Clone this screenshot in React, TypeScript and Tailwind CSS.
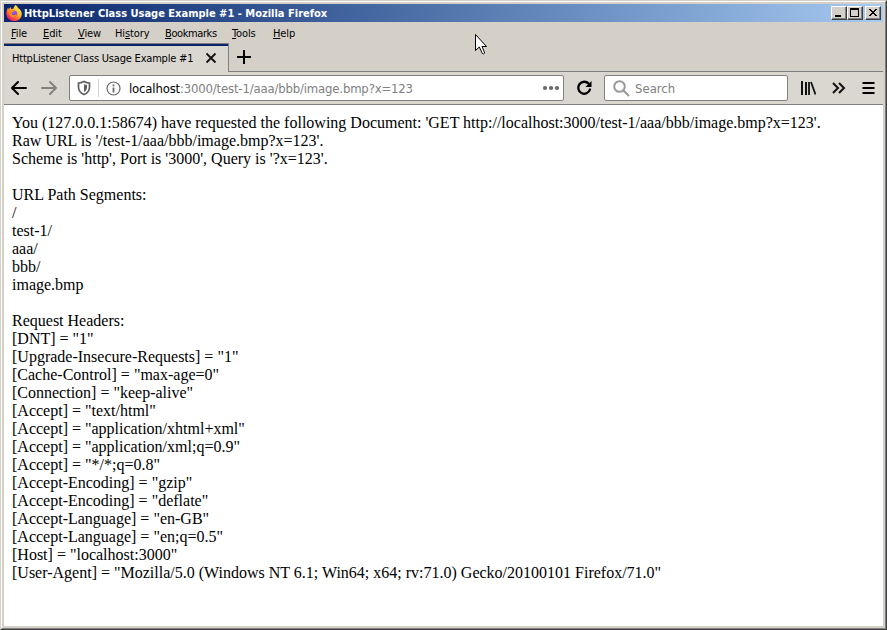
import React from "react";

const menus: [string, string, string, string][] = [
  ["", "F", "ile", "w-[32px]"],
  ["", "E", "dit", "w-[35px]"],
  ["", "V", "iew", "w-[37px]"],
  ["Hi", "s", "tory", "w-[50px]"],
  ["", "B", "ookmarks", "w-[67px] tracking-[-0.4px]"],
  ["", "T", "ools", "w-[41px]"],
  ["", "H", "elp", "w-[40px]"],
];

const lines = [
  "You (127.0.0.1:58674) have requested the following Document: 'GET http://localhost:3000/test-1/aaa/bbb/image.bmp?x=123'.",
  "Raw URL is '/test-1/aaa/bbb/image.bmp?x=123'.",
  "Scheme is 'http', Port is '3000', Query is '?x=123'.",
  "",
  "URL Path Segments:",
  "/",
  "test-1/",
  "aaa/",
  "bbb/",
  "image.bmp",
  "",
  "Request Headers:",
  '[DNT] = "1"',
  '[Upgrade-Insecure-Requests] = "1"',
  '[Cache-Control] = "max-age=0"',
  '[Connection] = "keep-alive"',
  '[Accept] = "text/html"',
  '[Accept] = "application/xhtml+xml"',
  '[Accept] = "application/xml;q=0.9"',
  '[Accept] = "*/*;q=0.8"',
  '[Accept-Encoding] = "gzip"',
  '[Accept-Encoding] = "deflate"',
  '[Accept-Language] = "en-GB"',
  '[Accept-Language] = "en;q=0.5"',
  '[Host] = "localhost:3000"',
  '[User-Agent] = "Mozilla/5.0 (Windows NT 6.1; Win64; x64; rv:71.0) Gecko/20100101 Firefox/71.0"',
];

function FirefoxLogo() {
  return (
    <svg width="16" height="16" viewBox="0 0 16 16" className="shrink-0">
      <defs>
        <linearGradient id="flame" x1="0.85" y1="0.1" x2="0.2" y2="0.95">
          <stop offset="0" stopColor="#fff14a" />
          <stop offset="0.4" stopColor="#ffb52b" />
          <stop offset="0.7" stopColor="#ff5a36" />
          <stop offset="1" stopColor="#e3157f" />
        </linearGradient>
        <radialGradient id="globe" cx="0.5" cy="0.3" r="0.7">
          <stop offset="0" stopColor="#a05cf0" />
          <stop offset="1" stopColor="#5a3ccc" />
        </radialGradient>
      </defs>
      <path d="M9.5 0C11 1 11.8 2.2 12.2 3.2 14 4 15.8 6.200 15.800 9A7.500 7 0 0 1 .4 9C.2 6.500 1 4.500 2.200 2.600L2.800 4.200 4.600 2 5.200 4 7.500 3.800C7.700 2.200 8.500.9 9.500 0Z" fill="url(#flame)" />
      <circle cx="8" cy="8.600" r="3" fill="url(#globe)" />
      <path d="M2.500 4.600C4 4 5.800 4.200 6.800 5.300L8.800 6 6.300 7.500C5.300 8.500 5.800 9.600 6.800 10 8.500 10.500 9.500 9.300 10.800 9.600 9.800 12.400 6.400 13 4.400 11 3 9.500 2.300 7.300 2.500 4.600Z" fill="#ff8a24" />
    </svg>
  );
}

function CaptionButton({ children }: { children: React.ReactNode }) {
  return (
    <div className="h-[14px] w-4 border border-t-white border-l-white border-r-[#404040] border-b-[#404040] bg-[#d4d0c8]">
      <div className="h-full w-full border-r border-b border-[#808080]">
        <svg width="13" height="11" viewBox="0 0 13 11" shapeRendering="crispEdges" className="block">
          {children}
        </svg>
      </div>
    </div>
  );
}

function TitleBar() {
  return (
    <div className="flex h-[18px] items-center bg-linear-to-r from-[#0a246a] to-[#a6caf0] pr-[2px] pl-[2px]">
      <FirefoxLogo />
      <span className="ml-[2px] flex-1 pt-[2px] text-[11px] leading-[16px] font-bold text-white">
        HttpListener Class Usage Example #1 - Mozilla Firefox
      </span>
      <CaptionButton><path d="M3 8h6v2H3z" /></CaptionButton>
      <CaptionButton><path d="M2 1h9v9H2zM3 3v6h7V3z" fillRule="evenodd" /></CaptionButton>
      <div className="w-[2px]" />
      <CaptionButton>
        <path d="M3 2h2v1h1v1h2V3h1V2h2v1h-1v1H9v1H8v1h1v1h1v1h1v1H9V8H8V7H6v1H5v1H3V8h1V7h1V6h1V5H5V4H4V3H3z" />
      </CaptionButton>
    </div>
  );
}

function MenuBar() {
  return (
    <div className="flex h-[21px] pl-[7px] text-[11px] leading-[23px] tracking-[-0.12px]">
      {menus.map(([a, u, b, w]) => (
        <span key={u} className={w + " shrink-0 whitespace-nowrap"}>
          {a}<span className="underline underline-offset-1">{u}</span>{b}
        </span>
      ))}
    </div>
  );
}

function TabStrip() {
  return (
    <div className="flex h-[29px]">
      <div className="flex w-[225px] items-center border-t border-r border-t-[#808080] border-r-[#808080] bg-[#dad7d0]">
        <div className="flex h-full w-full items-center border-t-2 border-[#0a246a] pl-2 text-[11px]">
          <span className="w-[193px] whitespace-nowrap tracking-[-0.2px]">HttpListener Class Usage Example #1</span>
          <svg className="-mt-[2px]" width="12" height="12" viewBox="0 0 12 12" stroke="#111" strokeWidth="1.8"><path d="M1.500 1.500l9 9m0-9l-9 9" /></svg>
        </div>
      </div>
      <div className="flex-1 border-b border-[#808080] pt-[7px] pl-2">
        <svg width="14" height="14" viewBox="0 0 14 14" stroke="#000" strokeWidth="2"><path d="M7 0v14M0 7h14" /></svg>
      </div>
    </div>
  );
}

function Toolbar() {
  return (
    <div className="flex h-[33px] items-center border-b border-[#808080] bg-[#dad7d0] pl-[7px]">
      <svg width="16" height="16" viewBox="0 0 16 16" fill="none" stroke="#000" strokeWidth="2" strokeLinecap="round" strokeLinejoin="round"><path d="M1 8h14M7 2L1 8l6 6" /></svg>
      <svg className="ml-[14px]" width="16" height="16" viewBox="0 0 16 16" fill="none" stroke="#85827d" strokeWidth="2" strokeLinecap="round" strokeLinejoin="round"><path d="M1 8h14M9 2l6 6-6 6" /></svg>
      <div className="ml-[12px] flex h-[26px] w-[495px] shrink-0 items-center rounded-[2px] border border-[#808080] bg-white pl-[7px]">
        <svg width="14" height="16" viewBox="0 0 14 16">
          <path d="M7 1.500C8.700 2.500 10.700 3 12.500 3V7.500C12.300 11 10.200 13.200 7 14.500 3.800 13.200 1.700 11 1.500 7.500V3C3.300 3 5.300 2.500 7 1.500Z" fill="none" stroke="#606060" strokeWidth="1.700" />
          <path d="M7 4.200L10 5V7.500C9.800 9.800 9 11 7 12Z" fill="#606060" />
        </svg>
        <div className="mx-[7px] h-[18px] w-px bg-[#d4d0c8]" />
        <svg width="15" height="15" viewBox="0 0 15 15" fill="none" stroke="#686868"><circle cx="7.500" cy="7.500" r="6.500" strokeWidth="1.200" /><path d="M7.500 6.500v5" strokeWidth="1.800" /><path d="M7.500 3.500v1.800" strokeWidth="1.800" /></svg>
        <span className="ml-[8px] flex-1 whitespace-nowrap pt-[2px] text-[13px] leading-[22px] tracking-[-0.17px] text-[#808080]"><span className="text-black">localhost</span>:3000/test-1/aaa/bbb/image.bmp?x=123</span>
        <svg className="mr-[3px]" width="18" height="6" viewBox="0 0 18 6" fill="#686868"><circle cx="3" cy="3" r="2.100" /><circle cx="9" cy="3" r="2.100" /><circle cx="15" cy="3" r="2.100" /></svg>
      </div>
      <svg className="ml-[12px]" width="17" height="16" viewBox="0 0 17 16"><path d="M12.800 3.800A6 6 0 1 0 14 9.500" fill="none" stroke="#000" strokeWidth="2.300" strokeLinecap="round" /><path d="M15.500 1v6H9.500z" /></svg>
      <div className="ml-[11px] flex h-[26px] w-[184px] shrink-0 items-center rounded-[2px] border border-[#808080] bg-white pl-[8px]">
        <svg width="17" height="17" viewBox="0 0 17 17" fill="none" stroke="#999" strokeWidth="2"><circle cx="6.500" cy="6.500" r="5.300" /><path d="M10.300 10.300l5.700 5.700" /></svg>
        <span className="ml-[5px] pt-[2px] text-[13px] leading-[22px] text-[#808080]">Search</span>
      </div>
      <svg className="ml-[12px]" width="16" height="16" viewBox="0 0 16 16" fill="none" stroke="#111" strokeWidth="2"><path d="M2 1v14M6 2v13" /><path d="M9 2v13M11 2l4.500 12.500" strokeWidth="1.800" /></svg>
      <svg className="ml-[15px]" width="15" height="14" viewBox="0 0 15 14" fill="none" stroke="#111" strokeWidth="2"><path d="M2 2l5 5-5 5M8 2l5 5-5 5" /></svg>
      <svg className="ml-[16px]" width="13" height="12" viewBox="0 0 13 12" stroke="#000" strokeWidth="2"><path d="M.5 1h12M.5 6h12M.5 11h12" /></svg>
    </div>
  );
}

export default function App() {
  return (
    <div className="relative h-[630px] w-[887px] border-t border-r border-b border-l border-t-[#d4d0c8] border-r-[#404040] border-b-[#404040] border-l-[#d4d0c8] font-['DejaVu_Sans_Condensed','DejaVu_Sans',sans-serif] [font-stretch:condensed]">
      <div className="h-full w-full border border-t-white border-r-[#808080] border-b-[#808080] border-l-white">
        <div className="flex h-full w-full flex-col border-2 border-[#d4d0c8] bg-[#d4d0c8]">
          <TitleBar />
          <MenuBar />
          <TabStrip />
          <Toolbar />
          <main className="flex-1 bg-white px-2 pt-[9px] font-['Liberation_Serif',serif] text-[16px] leading-[18px] text-black">
            {lines.map((line, i) => <div key={i} className="h-[18px] whitespace-pre">{line}</div>)}
          </main>
        </div>
      </div>
      <svg className="absolute top-[33px] left-[474px]" width="13" height="22" viewBox="0 0 13 22"><path d="M.5.500V16.500L4.300 13 7.300 19.500Q8.800 20.500 9.700 19L7 12.500H11.500Z" fill="white" stroke="black" /></svg>
    </div>
  );
}
